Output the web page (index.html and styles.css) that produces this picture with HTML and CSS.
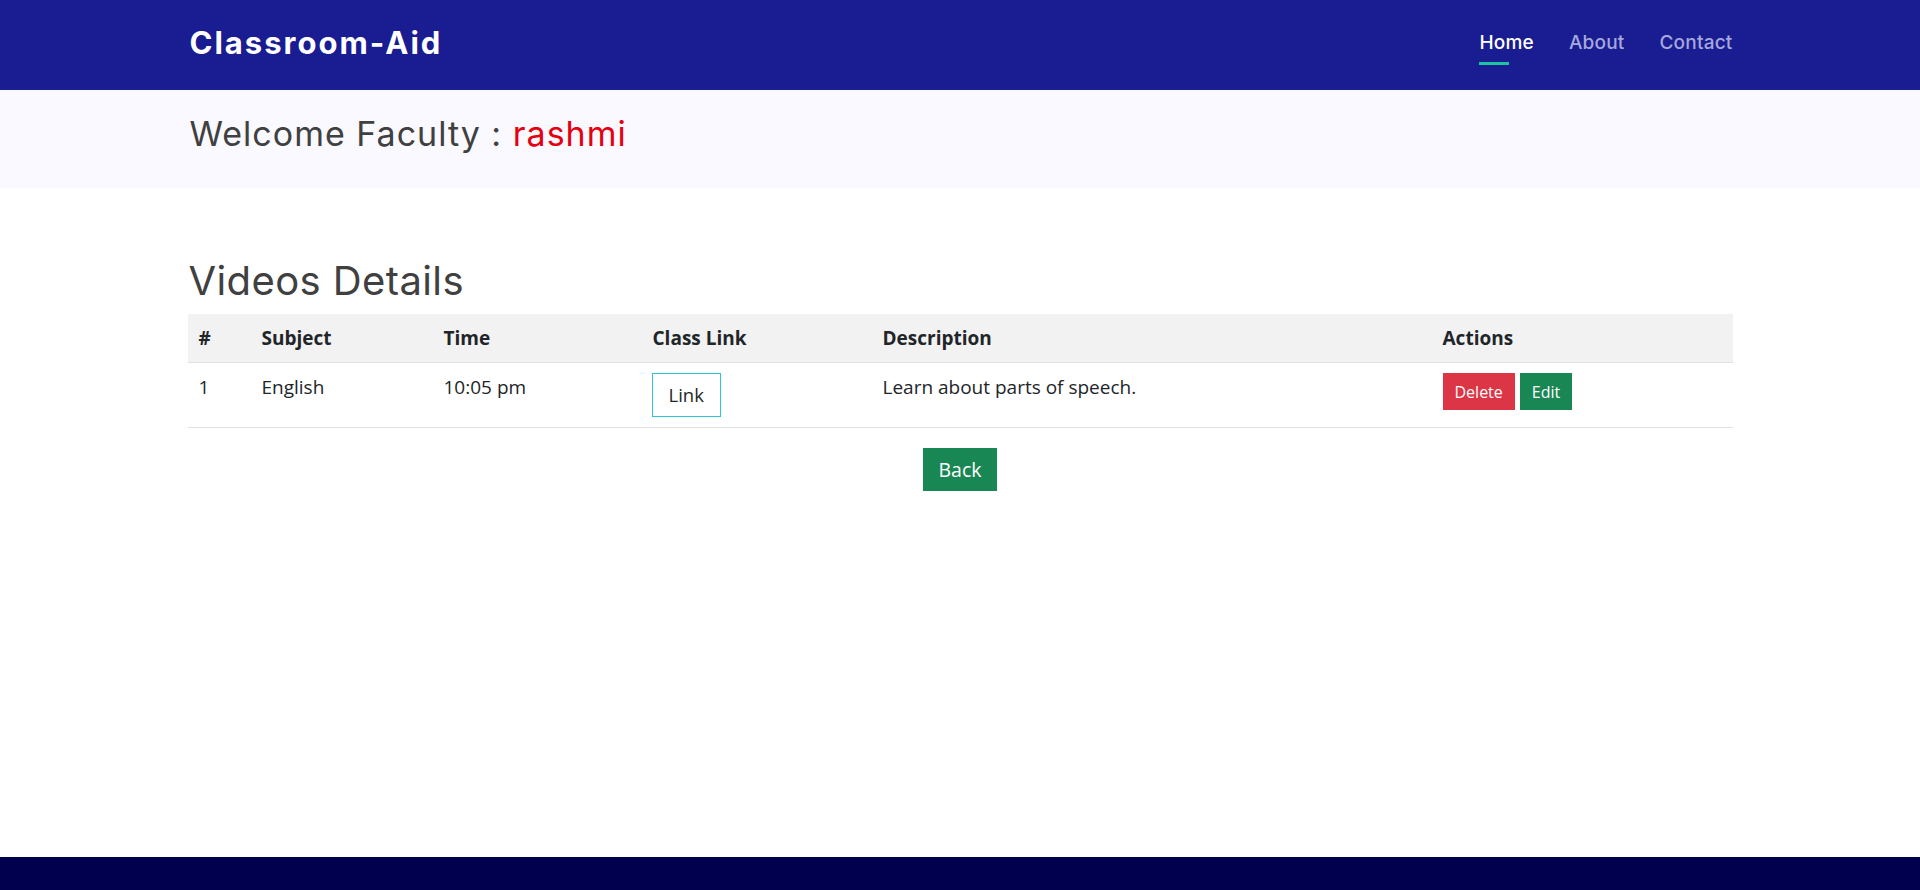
FILE: index.html
```html
<!DOCTYPE html>
<html lang="en">
<head>
<meta charset="utf-8">
<title>Classroom-Aid</title>
<link rel="stylesheet" href="styles.css">
</head>
<body>
<div class="page">
  <header class="topbar">
    <div class="container nav-row">
      <a class="brand" href="#">Classroom-Aid</a>
      <nav class="nav">
        <a class="nav-link active" href="#">Home</a>
        <a class="nav-link" href="#">About</a>
        <a class="nav-link" href="#">Contact</a>
      </nav>
    </div>
  </header>

  <section class="welcome">
    <div class="container">
      <h2 class="welcome-title">Welcome Faculty : <span class="name">rashmi</span></h2>
    </div>
  </section>

  <main class="main">
    <div class="container">
      <h1 class="page-title">Videos Details</h1>
      <table class="table">
        <colgroup>
          <col class="c1"><col class="c2"><col class="c3"><col class="c4"><col class="c5"><col class="c6">
        </colgroup>
        <thead>
          <tr>
            <th>#</th>
            <th>Subject</th>
            <th>Time</th>
            <th>Class Link</th>
            <th>Description</th>
            <th>Actions</th>
          </tr>
        </thead>
        <tbody>
          <tr>
            <td>1</td>
            <td>English</td>
            <td>10:05 pm</td>
            <td><a class="btn btn-link-outline" href="#">Link</a></td>
            <td>Learn about parts of speech.</td>
            <td>
              <div class="actions">
                <a class="btn btn-sm btn-danger" href="#">Delete</a>
                <a class="btn btn-sm btn-success" href="#">Edit</a>
              </div>
            </td>
          </tr>
        </tbody>
      </table>
      <div class="back-row">
        <a class="btn btn-back" href="#">Back</a>
      </div>
    </div>
  </main>

  <footer class="footer"></footer>
</div>
</body>
</html>
```

FILE: styles.css
```css
* { box-sizing: border-box; }

html, body {
  margin: 0;
  padding: 0;
}

body {
  font-family: "Open Sans", "Liberation Sans", sans-serif;
  color: #212529;
  background: #fff;
}

a { text-decoration: none; }

.page {
  min-height: 100vh;
  display: flex;
  flex-direction: column;
}

.container {
  width: 1545px;
  margin: 0 auto;
}

/* header */
.topbar {
  background: #1a1c92;
  height: 90px;
}

.nav-row {
  height: 90px;
  display: flex;
  align-items: center;
  justify-content: space-between;
}

.brand {
  font-family: Inter, "DejaVu Sans", sans-serif;
  font-weight: 700;
  font-size: 31px;
  color: #fff;
  letter-spacing: 2px;
  line-height: 1;
  margin-top: -6px;
  padding-left: 2px;
}

.nav {
  display: flex;
  gap: 35px;
  padding-top: 7px;
}

.nav-link {
  font-family: Inter, "DejaVu Sans", sans-serif;
  font-weight: 500;
  font-size: 19px;
  letter-spacing: 0.2px;
  line-height: 22px;
  color: #a6a8dc;
  display: flex;
  flex-direction: column;
  align-items: flex-start;
}

.nav-link::after {
  content: "";
  display: block;
  width: 30px;
  height: 3px;
  margin-top: 8px;
  background: transparent;
}

.nav-link.active { color: #fff; }
.nav-link.active::after { background: #1fc1a3; }

/* welcome band */
.welcome {
  background: #f9f9ff;
  padding: 23px 0 34px;
}

.welcome-title {
  margin: 0;
  padding-left: 2px;
  font-family: Inter, "DejaVu Sans", sans-serif;
  font-weight: 400;
  font-size: 34px;
  letter-spacing: 1px;
  line-height: 41px;
  color: #404040;
}

.name { color: #e6000f; }

/* main */
.main {
  flex: 1;
  padding-top: 69px;
}

.page-title {
  margin: 0 0 9px;
  padding-left: 1px;
  font-family: Inter, "DejaVu Sans", sans-serif;
  font-weight: 400;
  font-size: 40px;
  letter-spacing: 0.4px;
  line-height: 48px;
  color: #404040;
}

.table {
  width: 100%;
  border-collapse: collapse;
  table-layout: fixed;
  font-size: 19px;
  line-height: 1.5;
}

.c1 { width: 63px; }
.c2 { width: 182px; }
.c3 { width: 209px; }
.c4 { width: 230px; }
.c5 { width: 560px; }
.c6 { width: 301px; }

.table th {
  background: #f2f2f2;
  font-weight: 700;
  text-align: left;
  padding: 9.75px 10px 9.75px 11px;
  border-bottom: 1px solid #dee2e6;
  color: #212529;
}

.table td {
  padding: 10px 10px 10px 11px;
  vertical-align: top;
  border-bottom: 1px solid #dee2e6;
  color: #212529;
}

.btn {
  display: inline-block;
  font-family: "Open Sans", "Liberation Sans", sans-serif;
  line-height: 1.5;
  text-align: center;
}

.btn-link-outline {
  font-size: 18.5px;
  color: #212529;
  border: 1px solid #2fc3d6;
  padding: 7px 16px;
  margin-left: -1px;
}

.actions {
  display: flex;
  gap: 5px;
}

.btn-sm {
  font-size: 16px;
  padding: 5.5px 11px;
  border: 1px solid transparent;
  color: #fff;
}

.btn-danger { background: #dc3545; }
.btn-success { background: #198754; }

.back-row {
  display: flex;
  justify-content: center;
  margin-top: 20px;
}

.btn-back {
  font-size: 19.5px;
  padding: 7px 15px;
  background: #198754;
  color: #fff;
}

.footer {
  background: #00004f;
  height: 33px;
}
```
